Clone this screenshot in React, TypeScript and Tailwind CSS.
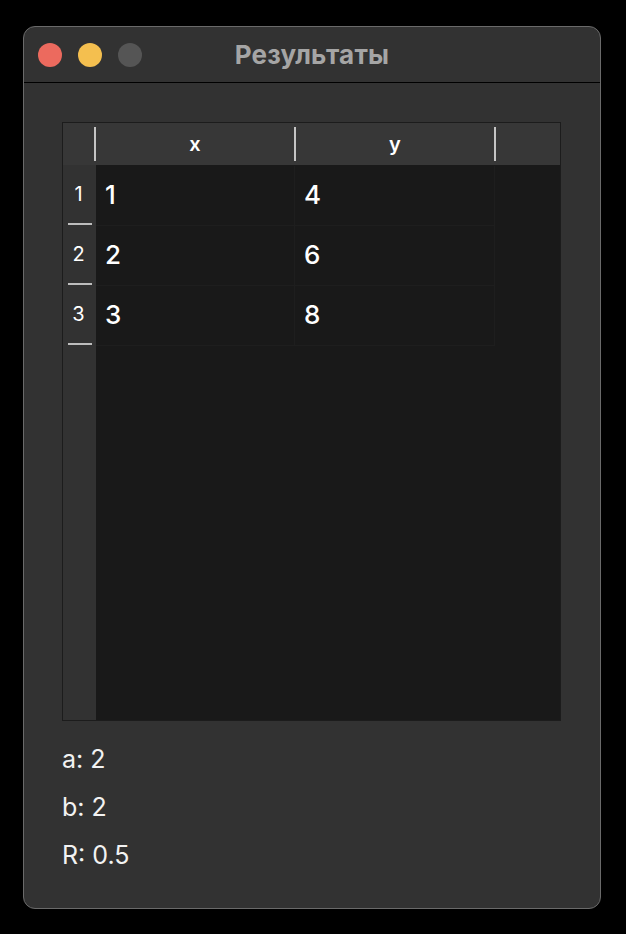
import React from "react";

const rows = [
  ["1", "4"],
  ["2", "6"],
  ["3", "8"],
];

export default function App() {
  return (
    <div
      className="w-[626px] h-[934px] bg-black pt-[26px] pl-[23px]"
      style={{ fontFamily: "Inter, 'Noto Sans', 'Liberation Sans', sans-serif" }}
    >
      <div className="w-[578px] h-[883px] rounded-[12px] border border-[#6a6a6a] bg-[#323232] overflow-hidden flex flex-col">
        {/* Title bar */}
        <div className="h-[56px] shrink-0 border-b border-black grid grid-cols-[1fr_auto_1fr] items-center">
          <div className="flex items-center gap-[16px] pl-[14px]">
            <div className="w-[24px] h-[24px] rounded-full bg-[#ec6a5e]" />
            <div className="w-[24px] h-[24px] rounded-full bg-[#f4bf4f]" />
            <div className="w-[24px] h-[24px] rounded-full bg-[#555555]" />
          </div>
          <div className="text-[26px] font-bold text-[#a5a5a5] leading-none tracking-[0.2px]">
            Результаты
          </div>
          <div />
        </div>

        {/* Body */}
        <div className="flex-1 flex flex-col pt-[39px] pl-[38px] pr-[39px]">
          <div className="w-[499px] h-[599px] border border-[#1c1c1c] flex flex-col">
            {/* header */}
            <div className="h-[42px] shrink-0 bg-[#373737] flex items-center">
              <div className="w-[31px] h-full" />
              <div className="w-[2px] h-[34px] bg-[#c4c4c4]" />
              <div className="w-[198px] h-full flex items-center justify-center text-white text-[20px] font-semibold">
                x
              </div>
              <div className="w-[2px] h-[34px] bg-[#c4c4c4]" />
              <div className="w-[198px] h-full flex items-center justify-center text-white text-[20px] font-semibold">
                y
              </div>
              <div className="w-[2px] h-[34px] bg-[#c4c4c4]" />
              <div className="flex-1 h-full" />
            </div>
            {/* body */}
            <div className="flex-1 flex">
              <div className="w-[33px] bg-[#323232] flex flex-col pt-[1px]">
                {rows.map((r, i) => (
                  <div key={i} className="h-[60px] flex flex-col items-center">
                    <div className="flex-1 flex items-center text-[20px] text-white pb-[2px] pr-[2px]">
                      {i + 1}
                    </div>
                    <div className="w-[24px] h-[2px] bg-[#bdbdbd] mb-[1px]" />
                  </div>
                ))}
              </div>
              <div className="flex-1 bg-[#191919] pt-[1px]">
                <div className="w-[399px] flex flex-col">
                  {rows.map((r, i) => (
                    <div key={i} className="h-[60px] grid grid-cols-[199px_200px] border-b border-[#1e1e1e]">
                      <div className="flex items-center pl-[9px] pb-[3px] text-[26px] text-white font-medium border-r border-[#1e1e1e]">
                        {r[0]}
                      </div>
                      <div className="flex items-center pl-[9px] pb-[3px] text-[26px] text-white font-medium border-r border-[#1e1e1e]">
                        {r[1]}
                      </div>
                    </div>
                  ))}
                </div>
              </div>
            </div>
          </div>

          <div className="mt-[14px] flex flex-col text-[25px] text-[#f2f2f2] leading-[48px]">
            <div>a: 2</div>
            <div>b: 2</div>
            <div>R: 0.5</div>
          </div>
        </div>
      </div>
    </div>
  );
}
